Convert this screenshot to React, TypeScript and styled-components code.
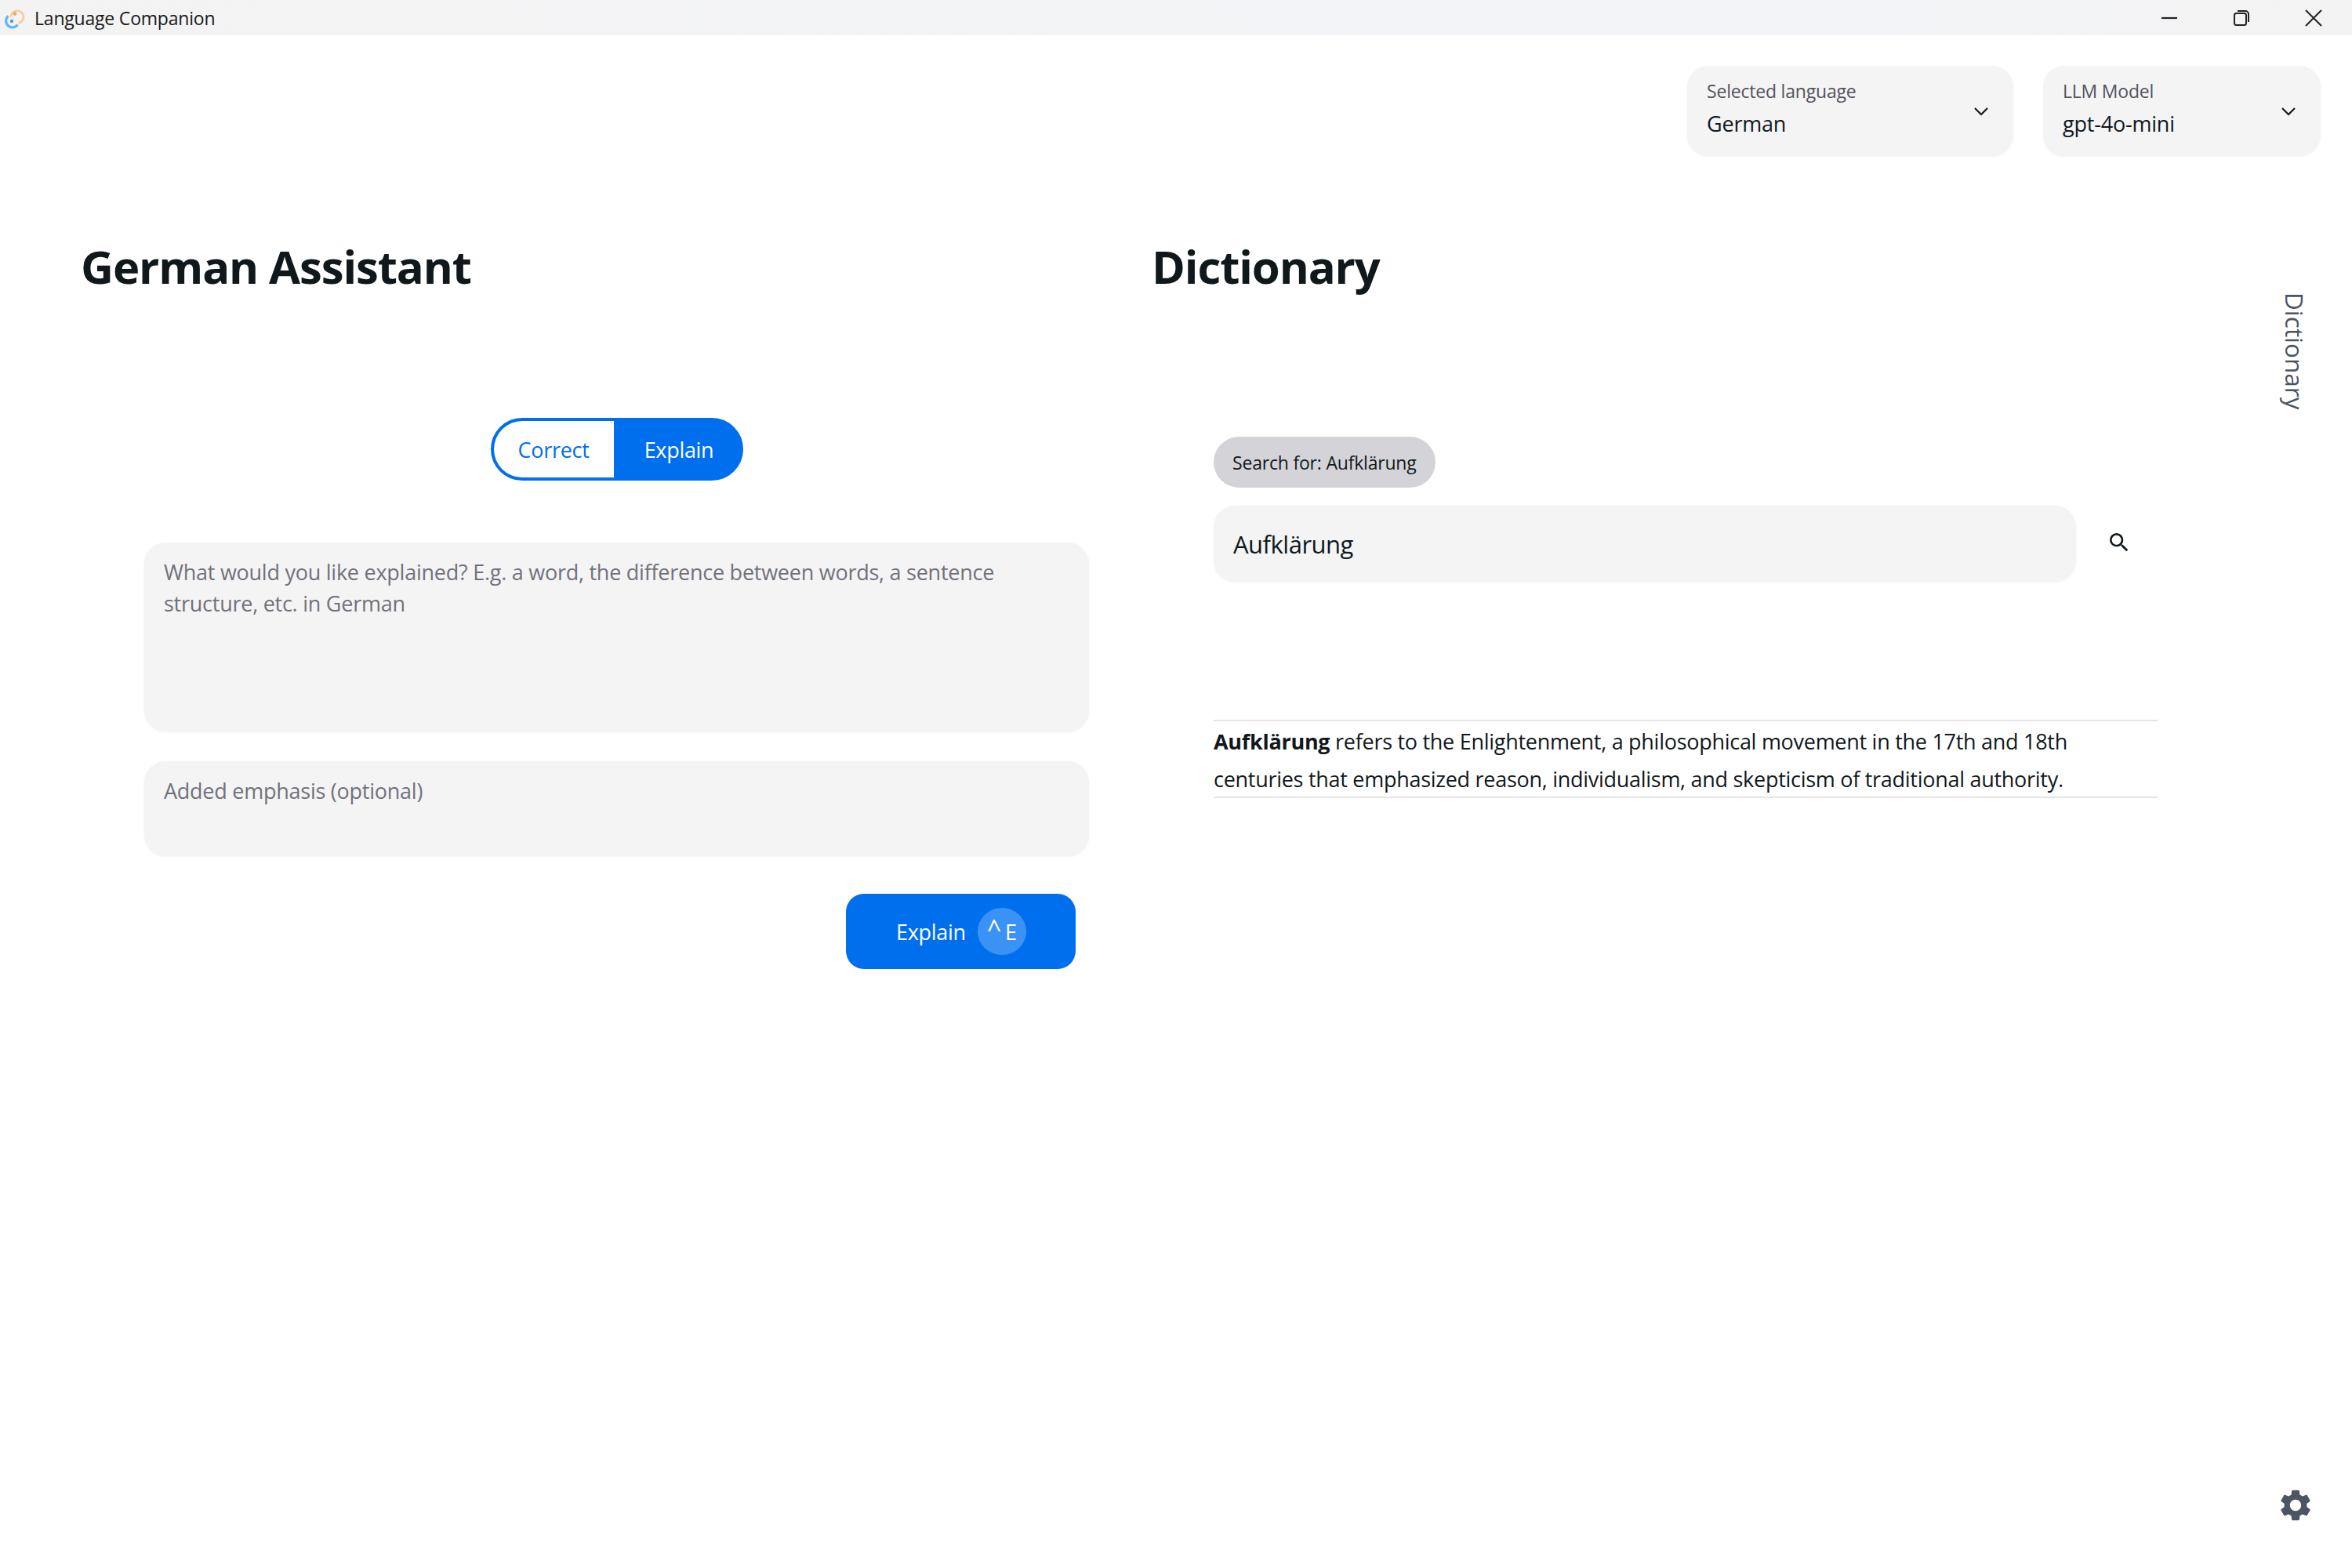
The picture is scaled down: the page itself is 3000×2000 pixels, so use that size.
import React from 'react';
import styled, { createGlobalStyle } from 'styled-components';
import { MdSearch, MdSettings } from 'react-icons/md';

const FONT = '"Open Sans", "Noto Sans", sans-serif';

const GlobalStyle = createGlobalStyle`
  html, body {
    margin: 0;
    padding: 0;
    background: #fff;
  }
  * {
    box-sizing: border-box;
  }
`;

const AppLogo = () => (
  <svg width="30" height="30" viewBox="0 0 30 30" fill="none">
    <path d="M11 13.5a8 8 0 1 1 9.5 8" stroke="#f8cf9f" strokeWidth="3" />
    <circle cx="16" cy="9.5" r="2.4" fill="#f2ab63" />
    <path d="M19.5 23.5a8.2 8.2 0 1 1-12-11" stroke="#62b7f7" strokeWidth="3.2" />
    <circle cx="12" cy="19" r="2.2" fill="#3f9df0" />
  </svg>
);

const Chevron = () => (
  <ChevronIcon width="20" height="12" viewBox="0 0 20 12" fill="none">
    <path d="M2 2l8 8 8-8" stroke="#11181c" strokeWidth="2.2" />
  </ChevronIcon>
);

const App = () => {
  return (
    <Page>
      <GlobalStyle />
      <TitleBar>
        <AppLogo />
        <WindowTitle>Language Companion</WindowTitle>
        <WindowControls>
          <WindowButton>
            <svg width="22" height="22" viewBox="0 0 22 22" fill="none">
              <path d="M1 11h20" stroke="#222" strokeWidth="2.2" />
            </svg>
          </WindowButton>
          <WindowButton>
            <svg width="22" height="22" viewBox="0 0 22 22" fill="none">
              <rect x="2" y="5" width="15" height="15" rx="2.5" stroke="#222" strokeWidth="2" />
              <path d="M6 2h10a4 4 0 0 1 4 4v10" stroke="#222" strokeWidth="2" />
            </svg>
          </WindowButton>
          <WindowButton>
            <svg width="22" height="22" viewBox="0 0 22 22" fill="none">
              <path d="M1 1l20 20M21 1L1 21" stroke="#222" strokeWidth="2" />
            </svg>
          </WindowButton>
        </WindowControls>
      </TitleBar>

      <TopBar>
        <SelectBox $width={416}>
          <SelectText>
            <SelectLabel>Selected language</SelectLabel>
            <SelectValue>German</SelectValue>
          </SelectText>
          <Chevron />
        </SelectBox>
        <SelectBox $width={354}>
          <SelectText>
            <SelectLabel>LLM Model</SelectLabel>
            <SelectValue>gpt-4o-mini</SelectValue>
          </SelectText>
          <Chevron />
        </SelectBox>
      </TopBar>

      <Columns>
        <AssistantColumn>
          <Heading>German Assistant</Heading>
          <AssistantBody>
            <Toggle>
              <ToggleOption>Correct</ToggleOption>
              <ToggleOption $active>Explain</ToggleOption>
            </Toggle>
            <Field $height={241}>
              What would you like explained? E.g. a word, the difference between words, a sentence
              structure, etc. in German
            </Field>
            <Field $height={121}>Added emphasis (optional)</Field>
            <SubmitRow>
              <SubmitButton>
                Explain
                <Shortcut>
                  <Caret>^</Caret>E
                </Shortcut>
              </SubmitButton>
            </SubmitRow>
          </AssistantBody>
        </AssistantColumn>

        <DictionaryColumn>
          <Heading>Dictionary</Heading>
          <DictionaryBody>
            <Chip>Search for: Aufklärung</Chip>
            <SearchRow>
              <SearchInput>Aufklärung</SearchInput>
              <SearchButton>
                <MdSearch size={32} color="#11181c" />
              </SearchButton>
            </SearchRow>
            <Definition>
              <strong>Aufklärung</strong> refers to the Enlightenment, a philosophical movement in
              the 17th and 18th centuries that emphasized reason, individualism, and skepticism of
              traditional authority.
            </Definition>
          </DictionaryBody>
        </DictionaryColumn>

        <SideTab>Dictionary</SideTab>
      </Columns>

      <SettingsButton>
        <MdSettings size={48} color="#4b5563" />
      </SettingsButton>
    </Page>
  );
};

export default App;

const Page = styled.div`
  position: relative;
  width: 3000px;
  height: 2000px;
  background: #fff;
  color: #11181c;
  font-family: ${FONT};
  overflow: hidden;
`;

const TitleBar = styled.div`
  display: flex;
  align-items: center;
  height: 45px;
  padding-left: 3px;
  background: linear-gradient(90deg, #f3f3f3 0%, #f3f4f7 60%, #f3f4f7 80%, #f3f3f3 100%);
`;

const WindowTitle = styled.span`
  margin-left: 11px;
  font-size: 23px;
  letter-spacing: -0.2px;
  color: #1a1a1a;
`;

const WindowControls = styled.div`
  display: flex;
  margin-left: auto;
  padding-right: 3px;
`;

const WindowButton = styled.div`
  display: flex;
  align-items: center;
  justify-content: center;
  width: 92px;
  height: 45px;
`;

const TopBar = styled.div`
  display: flex;
  justify-content: flex-end;
  gap: 38px;
  padding: 39px 40px 0 0;
`;

const SelectBox = styled.div<{ $width: number }>`
  display: flex;
  align-items: center;
  justify-content: space-between;
  width: ${props => props.$width}px;
  height: 115px;
  padding: 0 31px 6px 25px;
  background: #f4f4f5;
  border-radius: 27px;
  box-shadow: 0 1px 3px rgba(0, 0, 0, 0.05);
`;

const SelectText = styled.div`
  display: flex;
  flex-direction: column;
  gap: 7px;
`;

const ChevronIcon = styled.svg`
  margin-top: 6px;
`;

const SelectLabel = styled.span`
  font-size: 23px;
  line-height: 32px;
  letter-spacing: -0.2px;
  color: #52525b;
`;

const SelectValue = styled.span`
  font-size: 27px;
  line-height: 38px;
  letter-spacing: -0.2px;
`;

const Columns = styled.div`
  display: flex;
  padding: 101px 0 0 103px;
`;

const AssistantColumn = styled.section`
  width: 1366px;
`;

const DictionaryColumn = styled.section`
  width: 1283px;
`;

const Heading = styled.h1`
  margin: 0;
  font-size: 58px;
  font-weight: 700;
  line-height: 80px;
  letter-spacing: -1.1px;
  color: #11181c;
`;

const AssistantBody = styled.div`
  display: flex;
  flex-direction: column;
  align-items: center;
  width: 1205px;
  margin: 153px 0 0 81px;
`;

const Toggle = styled.div`
  display: flex;
  height: 80px;
  margin-bottom: 79px;
  background: #006fee;
  border: 4px solid #006fee;
  border-radius: 40px;
  overflow: hidden;
`;

const ToggleOption = styled.div<{ $active?: boolean }>`
  display: flex;
  align-items: center;
  justify-content: center;
  width: ${props => (props.$active ? 161 : 153)}px;
  padding-left: ${props => (props.$active ? 6 : 0)}px;
  font-size: 27px;
  letter-spacing: -0.3px;
  color: ${props => (props.$active ? '#fff' : '#006fee')};
  background: ${props => (props.$active ? '#006fee' : '#fff')};
`;

const Field = styled.div<{ $height: number }>`
  width: 100%;
  height: ${props => props.$height}px;
  margin-bottom: 38px;
  padding: 18px 25px;
  font-size: 27px;
  line-height: 40px;
  letter-spacing: -0.25px;
  color: #71717a;
  background: #f4f4f5;
  border-radius: 27px;
  box-shadow: 0 1px 3px rgba(0, 0, 0, 0.05);
`;

const SubmitRow = styled.div`
  display: flex;
  justify-content: flex-end;
  width: 100%;
  margin-top: 10px;
  padding-right: 17px;
`;

const SubmitButton = styled.div`
  display: flex;
  align-items: center;
  gap: 15px;
  width: 293px;
  height: 96px;
  padding-left: 64px;
  font-size: 27px;
  letter-spacing: -0.3px;
  color: #fff;
  background: #006fee;
  border-radius: 23px;
`;

const Shortcut = styled.span`
  display: flex;
  align-items: center;
  justify-content: center;
  gap: 5px;
  width: 62px;
  height: 60px;
  background: #3b92f5;
  border-radius: 50%;
`;

const Caret = styled.span`
  margin-top: -6px;
  font-size: 32px;
  line-height: 32px;
`;

const DictionaryBody = styled.div`
  margin: 177px 0 0 79px;
`;

const Chip = styled.div`
  display: inline-flex;
  align-items: center;
  height: 65px;
  padding: 0 24px;
  font-size: 23px;
  letter-spacing: -0.2px;
  background: #d4d4d8;
  border-radius: 33px;
  vertical-align: top;
`;

const SearchRow = styled.div`
  display: flex;
  align-items: center;
  margin-top: 23px;
`;

const SearchInput = styled.div`
  display: flex;
  flex: none;
  align-items: center;
  width: 1100px;
  height: 97px;
  padding: 0 25px;
  font-size: 31px;
  letter-spacing: -0.5px;
  background: #f4f4f5;
  border-radius: 27px;
  box-shadow: 0 1px 3px rgba(0, 0, 0, 0.05);
`;

const SearchButton = styled.div`
  display: flex;
  flex: none;
  align-items: center;
  justify-content: center;
  width: 110px;
  margin-bottom: 4px;
`;

const Definition = styled.div`
  height: 100px;
  margin-top: 176px;
  padding-top: 2px;
  font-size: 27px;
  line-height: 48px;
  letter-spacing: -0.28px;
  border-top: 2px solid #e4e4e7;
  border-bottom: 2px solid #e4e4e7;
`;

const SideTab = styled.div`
  margin: 73px 0 0 156px;
  height: fit-content;
  writing-mode: vertical-rl;
  font-size: 31.5px;
  line-height: 38px;
  color: #4b5563;
`;

const SettingsButton = styled.div`
  position: absolute;
  right: 48px;
  bottom: 56px;
  display: flex;
`;
